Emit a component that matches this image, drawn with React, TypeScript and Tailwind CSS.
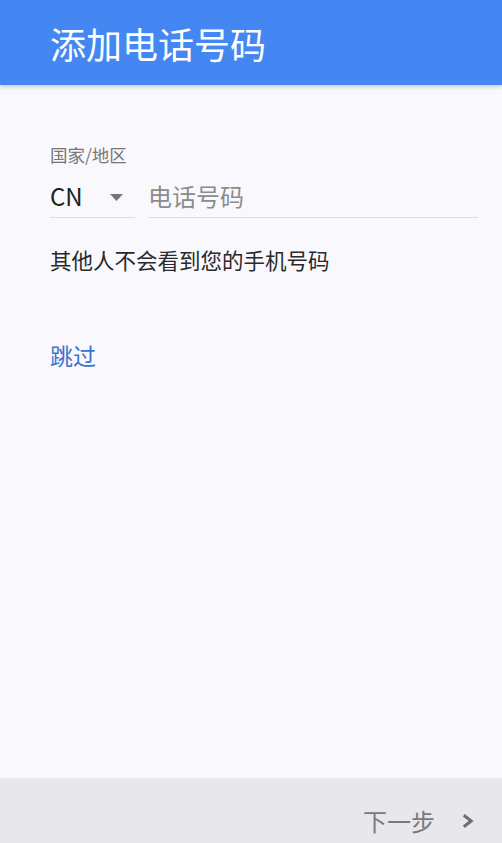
import React from "react";

const font = { fontFamily: '"Noto Sans CJK SC", "Noto Sans", sans-serif' };

const App = () => {
  return (
    <div className="flex h-[843px] w-full flex-col bg-[#f9f8fc]" style={font}>
      {/* header */}
      <header className="relative flex h-[85px] shrink-0 items-center bg-[#4486f2] pl-[50px] shadow-[0_2px_4px_rgba(0,0,0,0.18)]">
        <h1 className="text-[36px] font-normal leading-none text-white">添加电话号码</h1>
      </header>

      {/* body */}
      <main className="flex flex-col pl-[50px] pr-[24px] pt-[60px]">
        <p className="text-[17.5px] leading-[20px] text-[#777777]">国家/地区</p>

        <div className="mt-[15px] flex items-end">
          <div className="flex w-[85px] items-center border-b border-[#dedde2] pb-[5px]">
            <span className="text-[24px] leading-[32px] text-[#202020]">CN</span>
            <svg className="ml-auto mr-[12px] mt-[2px]" width="13" height="7" viewBox="0 0 13 7">
              <path d="M0 0 H13 L6.5 7 Z" fill="#767676" />
            </svg>
          </div>
          <div className="ml-[13px] flex-1 border-b border-[#dedde2] pb-[5px]">
            <span className="text-[24px] leading-[32px] text-[#8c8c8c]">电话号码</span>
          </div>
        </div>

        <p className="mt-[28px] text-[21.5px] leading-[28px] text-[#2a2a2a]">其他人不会看到您的手机号码</p>

        <button className="mt-[66px] self-start text-[23px] leading-[30px] text-[#3a73d2]">跳过</button>
      </main>

      {/* footer */}
      <footer className="mt-auto flex h-[65px] shrink-0 items-start justify-end bg-[#e8e7eb] pr-[28px] pt-[28px]">
        <span className="text-[24px] leading-[30px] text-[#7a7a7a]">下一步</span>
        <svg className="ml-[27px] mt-[8px]" width="12" height="14" viewBox="0 0 12 14">
          <path d="M1.8 1.2 L9.2 7 L1.8 12.8" fill="none" stroke="#6f6f6f" strokeWidth="3" />
        </svg>
      </footer>
    </div>
  );
};

export default App;
